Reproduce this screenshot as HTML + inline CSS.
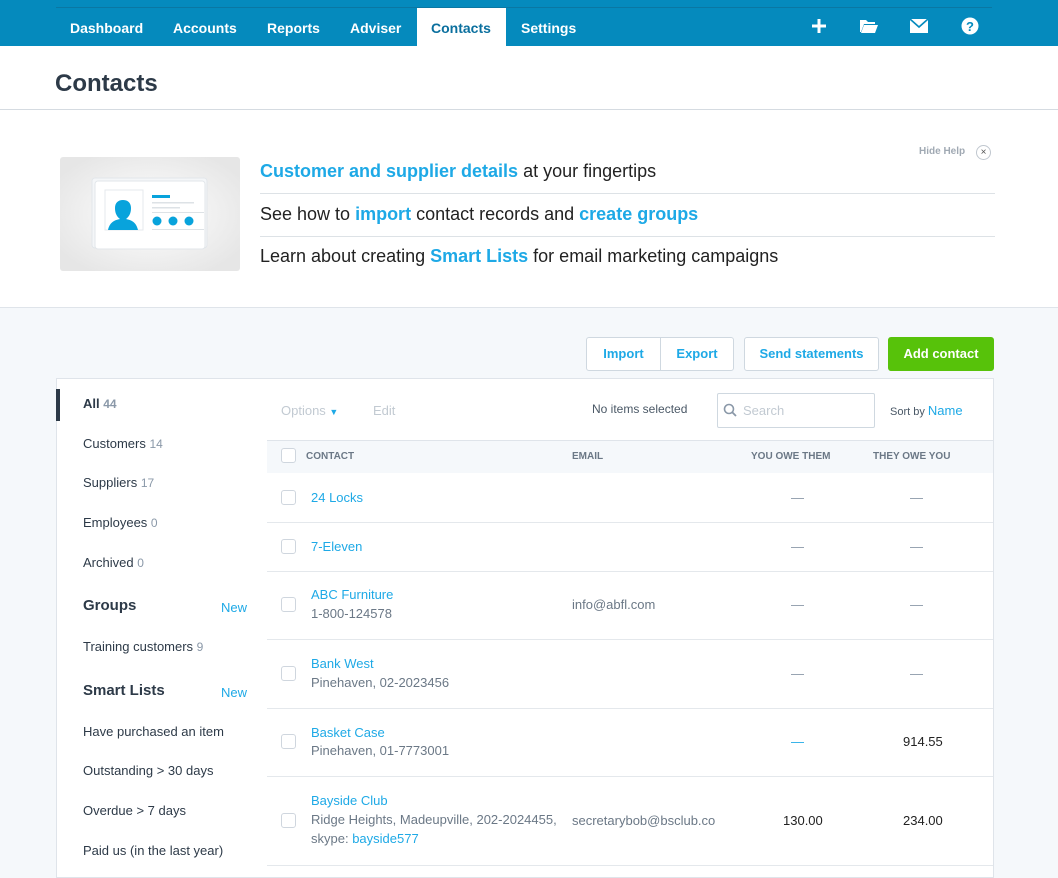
<!DOCTYPE html>
<html><head><meta charset="utf-8"><style>
*{margin:0;padding:0;box-sizing:border-box}
body{width:1058px;height:874px;overflow:hidden;font-family:"Liberation Sans",sans-serif;background:#f5f8fb;position:relative;color:#333}
.a{position:absolute}
.nav{left:0;top:0;width:1058px;height:46px;background:#058abd}
.nav .line{left:56px;top:7px;width:936px;height:1px;background:#0a77a3}
.nv{top:20px;color:#fff;font-weight:bold;font-size:14px}
.blue{color:#1ea9e6}
.hd{font-weight:bold}
.side{left:56px;top:378px;width:212px;height:500px;background:#fff;border:1px solid #dfe4ea;border-right:1px solid #dfe4ea}
.si{left:26px;font-size:13px;color:#2d3a48}
.si span{color:#8a98a8;font-size:12px}
.tbl{left:267px;top:378px;width:727px;height:500px;background:#fff;border:1px solid #dfe4ea;border-left:none}
.cb{width:15px;height:15px;border:1px solid #cfd6de;border-radius:3px;background:#fff}
.rl{left:0;width:726px;height:1px;background:#e4e8ec}
.lnk{color:#1ea9e6;font-size:13px}
.gr{color:#6b7886;font-size:13px}
.dash{color:#8a98a8;font-size:13px}
.btn{top:337px;height:34px;background:#fff;border:1px solid #cfd8e0;border-radius:3px;color:#1ea9e6;font-weight:bold;font-size:13px;line-height:32px;text-align:center}
.help{left:260px;font-size:18px;color:#222}
</style></head><body>
<div class="a nav"><div class="a line"></div>
<div class="a" style="left:417px;top:8px;width:89px;height:38px;background:#fff"></div>
<div class="a nv" style="left:70px">Dashboard</div>
<div class="a nv" style="left:173px">Accounts</div>
<div class="a nv" style="left:267px">Reports</div>
<div class="a nv" style="left:350px">Adviser</div>
<div class="a nv" style="left:431px;color:#0a6f9e">Contacts</div>
<div class="a nv" style="left:521px">Settings</div>
<svg class="a" style="left:810px;top:17px" width="18" height="18"><path d="M9 2v14M2 9h14" stroke="#fff" stroke-width="3"/></svg>
<svg class="a" style="left:859px;top:18px" width="20" height="16"><path d="M1 2h6l2 2h7v2H5L2 14H1z" fill="#fff"/><path d="M5 7h14l-3 8H2z" fill="#fff"/></svg>
<svg class="a" style="left:910px;top:19px" width="18" height="14"><rect width="18" height="14" fill="#fff"/><path d="M0 0l9 8 9-8" stroke="#058abd" stroke-width="1.6" fill="none"/></svg>
<svg class="a" style="left:961px;top:17px" width="18" height="18"><circle cx="9" cy="9" r="8.5" fill="#fff"/><text x="9" y="14" text-anchor="middle" font-family="Liberation Sans" font-weight="bold" font-size="13" fill="#058abd">?</text></svg>
</div>
<div class="a" style="left:0;top:46px;width:1058px;height:262px;background:#fff;border-bottom:1px solid #dfe4ea"></div>
<div class="a" style="left:0;top:109px;width:1058px;height:1px;background:#d5dbe1"></div>
<div class="a" style="left:55px;top:70px;font-size:24px;font-weight:bold;color:#2d3a48">Contacts</div>
<div class="a" style="left:919px;top:146px;font-size:10px;color:#a0a9b3;font-weight:bold">Hide Help</div>
<div class="a" style="left:976px;top:145px;width:15px;height:15px;border:1px solid #c0c7cf;border-radius:50%;font-size:10px;text-align:center;line-height:13px;color:#555">×</div>
<svg class="a" style="left:60px;top:157px" width="180" height="114">
<defs><radialGradient id="g" cx="50%" cy="50%" r="60%"><stop offset="0" stop-color="#fff"/><stop offset="1" stop-color="#e6e6e6"/></radialGradient></defs>
<rect width="180" height="114" rx="3" fill="url(#g)"/>
<rect x="32" y="21" width="115" height="70" rx="3" fill="#f4f6f8" stroke="#e2e6ea"/>
<rect x="35" y="24" width="110" height="68" rx="3" fill="#fff" stroke="#e2e6ea"/>
<rect x="45" y="33" width="38" height="40" fill="#fff" stroke="#e6e9ec"/>
<path d="M48 73c2-9 8-10 12-11-4-3-5-7-5-11 0-5 3-8 8-8s8 3 8 8c0 4-1 8-5 11 4 1 10 2 12 11z" fill="#08a3dc"/>
<rect x="92" y="38" width="18" height="3" fill="#08a3dc"/><rect x="92" y="45" width="42" height="1.5" fill="#dde2e6"/><rect x="92" y="50" width="28" height="1.5" fill="#dde2e6"/>
<rect x="92" y="55" width="52" height="1" fill="#dde2e6"/><rect x="92" y="72" width="52" height="1" fill="#dde2e6"/>
<circle cx="97" cy="64" r="4.5" fill="#08a3dc"/><circle cx="113" cy="64" r="4.5" fill="#08a3dc"/><circle cx="129" cy="64" r="4.5" fill="#08a3dc"/>
</svg>
<div class="a help" style="top:161px"><span class="blue hd">Customer and supplier details</span> at your fingertips</div>
<div class="a" style="left:260px;top:193px;width:735px;height:1px;background:#dde2e6"></div>
<div class="a help" style="top:204px">See how to <b class="blue">import</b> contact records and <b class="blue">create groups</b></div>
<div class="a" style="left:260px;top:236px;width:735px;height:1px;background:#dde2e6"></div>
<div class="a help" style="top:246px">Learn about creating <b class="blue">Smart Lists</b> for email marketing campaigns</div>

<div class="a btn" style="left:586px;width:148px"><span style="display:inline-block;width:74px;border-right:1px solid #cfd8e0">Import</span><span style="display:inline-block;width:72px">Export</span></div>
<div class="a btn" style="left:744px;width:135px">Send statements</div>
<div class="a btn" style="left:888px;width:106px;background:#57c20a;border-color:#57c20a;color:#fff">Add contact</div>

<div class="a side">
<div class="a" style="left:-1px;top:10px;width:4px;height:32px;background:#2d3a48"></div>
<div class="a si" style="top:17px;font-weight:bold">All <span style="font-weight:bold">44</span></div>
<div class="a si" style="top:57px">Customers <span>14</span></div>
<div class="a si" style="top:96px">Suppliers <span>17</span></div>
<div class="a si" style="top:136px">Employees <span>0</span></div>
<div class="a si" style="top:176px">Archived <span>0</span></div>
<div class="a si" style="top:218px;font-weight:bold;font-size:15px">Groups</div>
<div class="a lnk" style="left:164px;top:221px">New</div>
<div class="a si" style="top:260px">Training customers <span>9</span></div>
<div class="a si" style="top:303px;font-weight:bold;font-size:15px">Smart Lists</div>
<div class="a lnk" style="left:164px;top:306px">New</div>
<div class="a si" style="top:345px">Have purchased an item</div>
<div class="a si" style="top:384px">Outstanding &gt; 30 days</div>
<div class="a si" style="top:424px">Overdue &gt; 7 days</div>
<div class="a si" style="top:464px">Paid us (in the last year)</div>
</div>

<div class="a tbl">
<div class="a" style="left:14px;top:24px;font-size:13px;color:#c2cad2">Options <span style="color:#1ea9e6;font-size:9px">▼</span></div>
<div class="a" style="left:106px;top:24px;font-size:13px;color:#c2cad2">Edit</div>
<div class="a" style="left:325px;top:23px;font-size:12px;color:#4a5866">No items selected</div>
<div class="a" style="left:450px;top:14px;width:158px;height:35px;border:1px solid #cfd8e0;border-radius:2px"></div>
<svg class="a" style="left:456px;top:24px" width="14" height="14"><circle cx="6" cy="6" r="4.5" stroke="#8a98a8" stroke-width="1.6" fill="none"/><path d="M9.5 9.5l3.5 3.5" stroke="#8a98a8" stroke-width="1.8"/></svg>
<div class="a" style="left:476px;top:24px;font-size:13px;color:#c2cad2">Search</div>
<div class="a" style="left:623px;top:24px;font-size:11px;color:#4a5866">Sort by <span class="lnk">Name</span></div>
<div class="a" style="left:0;top:61px;width:726px;height:33px;background:#f5f8fb;border-top:1px solid #dfe4ea"></div>
<div class="a cb" style="left:14px;top:69px"></div>
<div class="a" style="left:39px;top:72px;font-size:10px;font-weight:bold;color:#6b7886">CONTACT</div>
<div class="a" style="left:305px;top:72px;font-size:10px;font-weight:bold;color:#6b7886">EMAIL</div>
<div class="a" style="left:484px;top:72px;font-size:10px;font-weight:bold;color:#6b7886">YOU OWE THEM</div>
<div class="a" style="left:606px;top:72px;font-size:10px;font-weight:bold;color:#6b7886">THEY OWE YOU</div>

<div class="a cb" style="left:14px;top:111px"></div><div class="a lnk" style="left:44px;top:111px">24 Locks</div>
<div class="a dash" style="left:524px;top:111px">—</div><div class="a dash" style="left:643px;top:111px">—</div>
<div class="a rl" style="top:143px"></div>
<div class="a cb" style="left:14px;top:160px"></div><div class="a lnk" style="left:44px;top:160px">7-Eleven</div>
<div class="a dash" style="left:524px;top:160px">—</div><div class="a dash" style="left:643px;top:160px">—</div>
<div class="a rl" style="top:192px"></div>
<div class="a cb" style="left:14px;top:218px"></div><div class="a lnk" style="left:44px;top:208px">ABC Furniture</div><div class="a gr" style="left:44px;top:227px">1-800-124578</div>
<div class="a gr" style="left:305px;top:218px">info@abfl.com</div>
<div class="a dash" style="left:524px;top:218px">—</div><div class="a dash" style="left:643px;top:218px">—</div>
<div class="a rl" style="top:260px"></div>
<div class="a cb" style="left:14px;top:287px"></div><div class="a lnk" style="left:44px;top:277px">Bank West</div><div class="a gr" style="left:44px;top:296px">Pinehaven, 02-2023456</div>
<div class="a dash" style="left:524px;top:287px">—</div><div class="a dash" style="left:643px;top:287px">—</div>
<div class="a rl" style="top:329px"></div>
<div class="a cb" style="left:14px;top:355px"></div><div class="a lnk" style="left:44px;top:346px">Basket Case</div><div class="a gr" style="left:44px;top:364px">Pinehaven, 01-7773001</div>
<div class="a dash" style="left:524px;top:355px;color:#1ea9e6">—</div><div class="a" style="left:636px;top:355px;font-size:13px;color:#222">914.55</div>
<div class="a rl" style="top:397px"></div>
<div class="a cb" style="left:14px;top:434px"></div><div class="a lnk" style="left:44px;top:414px">Bayside Club</div>
<div class="a gr" style="left:44px;top:433px">Ridge Heights, Madeupville, 202-2024455,</div>
<div class="a gr" style="left:44px;top:452px">skype: <span class="lnk">bayside577</span></div>
<div class="a gr" style="left:305px;top:434px">secretarybob@bsclub.co</div>
<div class="a" style="left:516px;top:434px;font-size:13px;color:#222">130.00</div><div class="a" style="left:636px;top:434px;font-size:13px;color:#222">234.00</div>
<div class="a rl" style="top:486px"></div>
</div>
</body></html>
